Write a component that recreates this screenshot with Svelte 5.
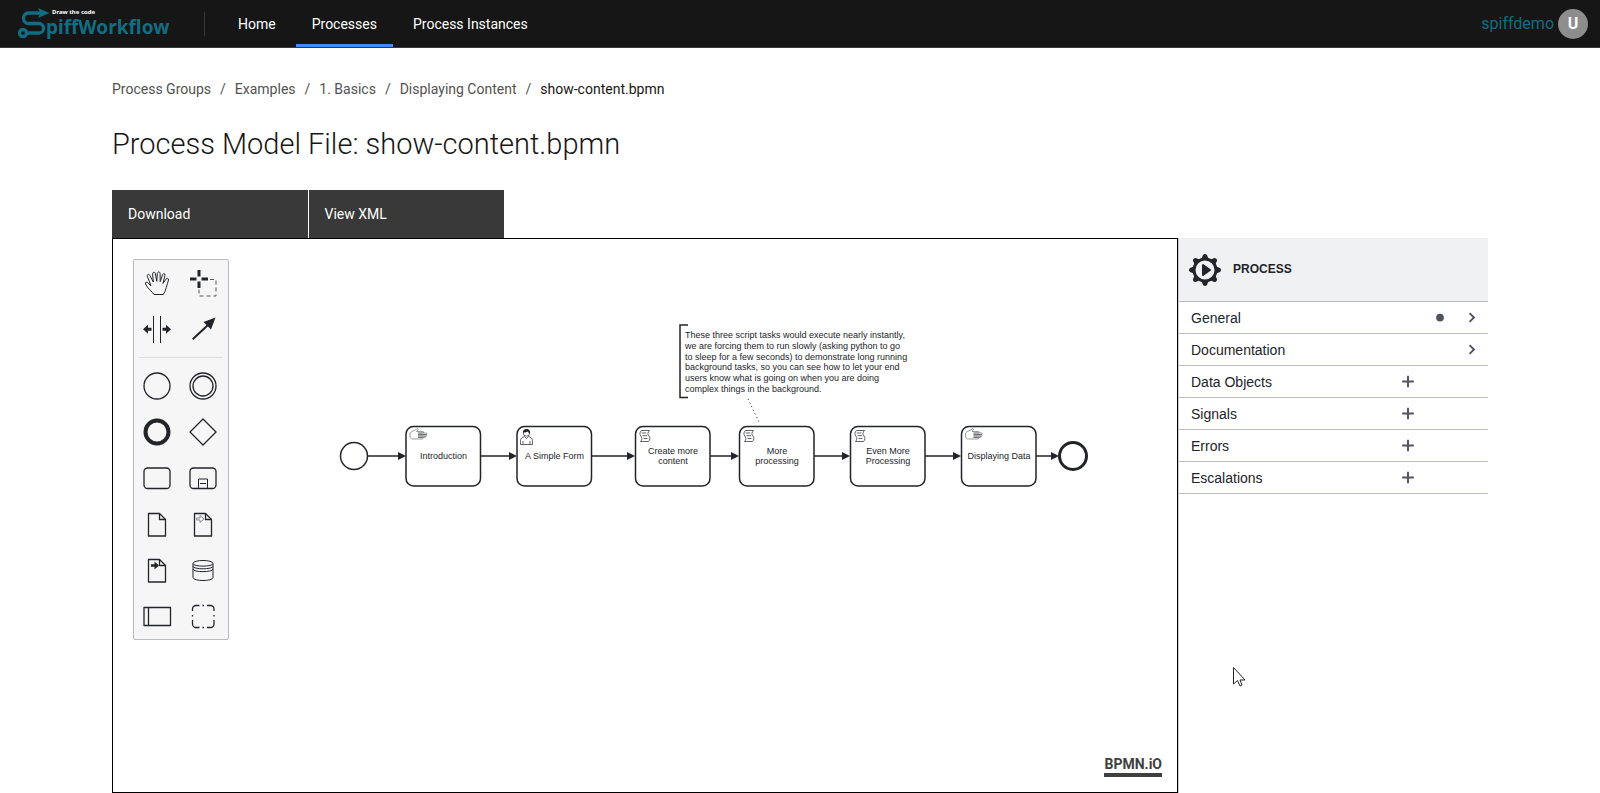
<script>
  const navItems = [
    { label: 'Home', active: false },
    { label: 'Processes', active: true },
    { label: 'Process Instances', active: false }
  ];
  const crumbs = ['Process Groups', 'Examples', '1. Basics', 'Displaying Content'];
  const actions = ['Download', 'View XML'];

  const tools = ['hand', 'lasso', 'space', 'connect'];
  const shapes = [
    'start event', 'intermediate event', 'end event', 'gateway', 'task', 'sub-process',
    'data object', 'data input', 'data output', 'data store', 'participant', 'group'
  ];

  const tasks = [
    { x: 406, type: 'manual', lines: ['Introduction'] },
    { x: 517, type: 'user', lines: ['A Simple Form'] },
    { x: 635.5, type: 'script', lines: ['Create more', 'content'] },
    { x: 739.5, type: 'script', lines: ['More', 'processing'] },
    { x: 850.5, type: 'script', lines: ['Even More', 'Processing'] },
    { x: 961.5, type: 'manual', lines: ['Displaying Data'] }
  ];
  const flows = [
    [368, 406], [481, 517], [592, 635], [710, 739], [814, 850], [925, 961], [1036, 1059]
  ];
  const note = [
    'These three script tasks would execute nearly instantly,',
    'we are forcing them to run slowly (asking python to go',
    'to sleep for a few seconds) to demonstrate long running',
    'background tasks, so you can see how to let your end',
    'users know what is going on when you are doing',
    'complex things in the background.'
  ];
  const noteY = [338, 349, 360, 370, 381, 392];

  const groups = [
    { label: 'General', dot: true, list: false },
    { label: 'Documentation', dot: false, list: false },
    { label: 'Data Objects', dot: false, list: true },
    { label: 'Signals', dot: false, list: true },
    { label: 'Errors', dot: false, list: true },
    { label: 'Escalations', dot: false, list: true }
  ];
  const teeth = [0, 45, 90, 135, 180, 225, 270, 315];
</script>

{#snippet glyph(name)}
  <svg class="glyph" viewBox="0 0 46 46" width="46" height="46" aria-hidden="true">
    {#if name === 'hand'}
      <path class="thin" d="M20 34.5C18 31.3 14 29 11.5 24 10.8 22.3 12.6 21.4 13.8 22.8L17 25.8 13.3 16.3C12.9 14.2 15 13.6 15.8 15.3L19.3 22 18.6 13.9C18.6 12 20.8 11.6 21.3 13.4L22.8 21.3 23.3 13.4C23.6 11.4 26 11.6 26.1 13.4L26.2 21.6 28.6 14.6C29.2 13 31.3 13.5 31 15.2L29 23.4 32 19.2C32.8 17.7 34.9 18.3 34.5 20.1 33 24.5 31.8 31 29.3 34.5Z" />
    {:else if name === 'lasso'}
      <path class="thick" d="M10 19h6.500M21.500 19H28M19 10v6.500M19 21.500V28" />
      <path class="dash" d="M30 19.500h6V36H19v-7" />
    {:else if name === 'space'}
      <path class="thin" d="M19.500 10v27M26.500 10v27" />
      <path class="solid" d="M9 23.300l5-4.500v3h3.500v3H14v3zM37 23.300l-5-4.500v3h-3.500v3H32v3z" />
    {:else if name === 'connect'}
      <path class="arrow" d="M12.700 33.300L28 19" />
      <path class="solid" d="M35.500 11.500l-4.500 12-7.500-7.500z" />
    {:else if name === 'start event'}
      <circle class="line" cx="23" cy="23" r="13" />
    {:else if name === 'intermediate event'}
      <circle class="line" cx="23" cy="23" r="13" />
      <circle class="line" cx="23" cy="23" r="10" />
    {:else if name === 'end event'}
      <circle class="bold" cx="23" cy="23" r="11.500" />
    {:else if name === 'gateway'}
      <path class="line" d="M23 10l13 13-13 13-13-13z" />
    {:else if name === 'task' || name === 'sub-process'}
      <rect class="line" x="10" y="13" width="26" height="20.500" rx="3.500" />
      {#if name === 'sub-process'}
        <path class="thin" d="M18.500 33.500V24h9v9.500M20 28.500h6" />
      {/if}
    {:else if name.startsWith('data') && name !== 'data store'}
      <path class="line" d="M14.500 12.500h11l6 6V35h-17z" />
      <path class="line" d="M25.500 12.500v6h6" />
      {#if name === 'data input'}
        <path class="faint" d="M16.500 17h3.500v-2.500l4 3.500-4 3.500V19h-3.500z" />
      {:else if name === 'data output'}
        <path class="solid" d="M17 17.300h3.500v-2.800l4.500 4-4.500 4v-2.800H17z" />
      {/if}
    {:else if name === 'data store'}
      <path class="thin" d="M13 16.500c0-4 20-4 20 0v14c0 4-20 4-20 0zM13 16.500c0 3.500 20 3.500 20 0M13 19.200c0 3.500 20 3.500 20 0M13 22c0 3.500 20 3.500 20 0" />
    {:else if name === 'participant'}
      <path class="line" d="M10 14.500h26.500v18H10zM14.500 14.500v18" />
    {:else}
      <path class="line" d="M12.500 18v-2a3.500 3.500 0 0 1 3.500-3.500h3.500M22.500 12.500h1.500M27 12.500h3.500a3.500 3.500 0 0 1 3.500 3.500V18M34 22v1.500M34 27v4a3.500 3.500 0 0 1-3.500 3.500H27M24 34.500h-1.500M19.500 34.500H16a3.500 3.500 0 0 1-3.500-3.500V27M12.500 23.500V22" />
    {/if}
  </svg>
{/snippet}

<div class="page">
  <header>
    <a class="logo" href="#home" aria-label="SpiffWorkflow home">
      <svg viewBox="0 0 160 40" width="160" height="40">
        <g fill="none" stroke="#126d82" stroke-width="3.300">
          <path d="M25 9H11.500a5 5 0 0 0-5 5v.500a5 5 0 0 0 5 5H22a4.500 4.500 0 0 1 4.500 4.500v.500a4.500 4.500 0 0 1-4.500 4.500H9.500" />
          <circle cx="6" cy="29" r="3.500" />
        </g>
        <path fill="#126d82" d="M21 4l11.500 5L21 14l2.500-5z" />
        <text class="tagline" x="35" y="10">Draw the code</text>
        <text class="wordmark" x="29" y="30">piffWorkflow</text>
      </svg>
    </a>
    <nav aria-label="Main">
      {#each navItems as item}
        <a href="#nav" class:active={item.active}>{item.label}</a>
      {/each}
    </nav>
    <a class="user" href="#profile">spiffdemo</a>
    <button class="avatar" aria-label="User menu">U</button>
  </header>

  <main>
    <nav class="crumbs" aria-label="Breadcrumb">
      {#each crumbs as crumb}
        <a href="#crumb">{crumb}</a><span>/</span>
      {/each}
      <a href="#crumb" class="current" aria-current="page">show-content.bpmn</a>
    </nav>
    <h1>Process Model File: show-content.bpmn</h1>
    <div class="actions">
      {#each actions as action}
        <button>{action}</button>
      {/each}
    </div>

    <div class="editor">
      <section class="canvas" aria-label="Diagram">
        <svg class="diagram" width="100%" height="100%">
          <g transform="translate(-113 -239)">
            {#each flows as [from, to]}
              <path class="flow" d="M{from} 456H{to - 6}" />
              <path class="head" d="M{to} 456l-8-4v8z" />
            {/each}
            <circle class="shape" cx="354" cy="456" r="13.500" />
            <circle class="shape end" cx="1073" cy="456" r="13.500" />
            {#each tasks as task}
              <rect class="shape" x={task.x} y="426.500" width="74.500" height="59.500" rx="7.500" />
              <g transform="translate({task.x} 426)">
                {#if task.type === 'manual'}
                  <path class="mark soft" d="M4 7.500C4.500 5.500 9 4.500 11.500 2.500c1 .6.300 2-1 3H17c.8 0 .8 1.500 0 1.500h-5 8c1 0 1 1.500 0 1.500h-8 8c1 0 1 1.500 0 1.500h-8 7c.8 0 .8 1.500 0 1.500h-7 4.500c.8 0 .8 1.500 0 1.500H7c-2 0-3-1.500-3-2.500z" />
                {:else if task.type === 'user'}
                  <path class="mark" d="M3.500 18.500v-4c0-2 2-3.500 4-4l2 2 2-2c2 .5 4 2 4 4v4zM6 18.500V15M13 18.500V15" />
                  <circle class="mark" cx="9.500" cy="7" r="3.200" />
                  <path class="head" d="M6 7.500c-.5-3 1.300-4.500 3.500-4.500s4 1.500 3.500 4.500c-1.500-.3-2-1.500-2.500-2-1 1-2.500 1-4 .8z" />
                {:else}
                  <path class="mark" d="M6 4.500h8c-2 2-2 3.500-.5 5.500s1 4-.5 5.500H5c2-2 1.500-3.500.3-5.500S4 6.500 6 4.500zM6.300 7h4.500M7 9.700h4.500M8 12.500h4" />
                {/if}
              </g>
              {#each task.lines as line, i}
                <text class="label" x={task.x + 37.5} y={(task.lines.length > 1 ? 454 : 459) + i * 10}>{line}</text>
              {/each}
            {/each}
            <path class="bracket" d="M688 325h-8v72.500h8" />
            <path class="dots" d="M748 399l12 25" />
            {#each note as line, i}
              <text class="note" x="685" y={noteY[i]}>{line}</text>
            {/each}
          </g>
        </svg>
        <div class="palette" role="toolbar" aria-label="Shapes">
          {#each tools as name}
            <button aria-label={name}>{@render glyph(name)}</button>
          {/each}
          <hr />
          {#each shapes as name}
            <button aria-label={name}>{@render glyph(name)}</button>
          {/each}
        </div>
        <a class="brand" href="#bpmn">BPMN.iO</a>
      </section>

      <aside>
        <div class="panel-head">
          <svg viewBox="0 0 32 32" width="32" height="32" aria-hidden="true">
            <circle cx="16" cy="16" r="11" fill="none" stroke="#22242a" stroke-width="3" />
            {#each teeth as angle}
              <path transform="rotate({angle} 16 16)" fill="#22242a" d="M12.500 5l1.500-4q2-2 4 0l1.500 4z" />
            {/each}
            <path fill="#22242a" stroke="#22242a" stroke-linejoin="round" stroke-width="2" d="M14 11v10l7-5z" />
          </svg>
          <strong>PROCESS</strong>
        </div>
        {#each groups as group}
          <div class="group">
            <button class="title">{group.label}</button>
            {#if group.dot}
              <svg class="icon" viewBox="0 0 32 32" width="32" height="31" aria-hidden="true"><circle cx="16" cy="16" r="4" fill="#505562" /></svg>
            {/if}
            {#if group.list}
              <button class="add" aria-label="Create {group.label}">
                <svg class="icon" viewBox="0 0 32 32" width="32" height="31"><path d="M16 10v12M10 16h12" /></svg>
              </button>
            {:else}
              <button aria-label="Toggle {group.label}">
                <svg class="icon" viewBox="0 0 32 32" width="32" height="31"><path d="M13.500 11.500L18 16l-4.500 4.500" /></svg>
              </button>
            {/if}
          </div>
        {/each}
      </aside>
    </div>
  </main>

  <svg class="pointer" viewBox="0 0 13 20" width="13" height="20" aria-hidden="true">
    <path d="M.5.500v16.500l4-3.500 2.500 5.500 2-1-2-5h5z" fill="#fff" stroke="#22242a" />
  </svg>
</div>

<style>
  :global(body) {
    margin: 0;
    background: #fff;
  }
  .page {
    display: flex;
    flex-direction: column;
    min-height: 100vh;
    box-sizing: border-box;
    position: relative;
    color: #161616;
    font-family: Roboto, "Liberation Sans", sans-serif;
    font-size: 14px;
    line-height: 18px;
  }
  button {
    border: 0;
    padding: 0;
    background: none;
    color: inherit;
    font: inherit;
    cursor: pointer;
  }
  a {
    color: inherit;
    text-decoration: none;
  }
  svg {
    display: block;
  }

  header {
    display: flex;
    align-items: center;
    height: 48px;
    box-sizing: border-box;
    padding: 0 12px 0 17px;
    border-bottom: 1px solid #393939;
    background: #161616;
    color: #fff;
  }
  .logo {
    padding: 4px 27px 4px 0;
  }
  .tagline {
    font: bold 6px "Noto Sans", sans-serif;
    fill: #fff;
  }
  .wordmark {
    font: 700 19px "Noto Sans", sans-serif;
    fill: #126d82;
  }
  header nav {
    display: flex;
    flex: 1;
    align-items: center;
    gap: 4px;
    padding-left: 18px;
    position: relative;
  }
  header nav::before {
    content: "";
    position: absolute;
    left: 0;
    width: 1px;
    height: 24px;
    background: #393939;
  }
  header nav a {
    padding: 15px 16px 11px;
    border-bottom: 3px solid transparent;
  }
  header nav a.active {
    border-color: #4589ff;
  }
  .user {
    padding: 0 4px;
    color: #126d82;
    font-size: 16px;
  }
  .avatar {
    width: 30px;
    height: 30px;
    border-radius: 50%;
    background: #8d8d8d;
    color: #fff;
    font-weight: 700;
    font-size: 16px;
  }

  main {
    display: flex;
    flex: 1;
    flex-direction: column;
    padding: 32px 7% 0;
  }
  .crumbs {
    display: flex;
    gap: 9px;
    color: #525252;
  }
  .crumbs .current {
    color: #161616;
  }
  h1 {
    margin: 28px 0;
    font-size: 29px;
    font-weight: 300;
    line-height: 36px;
  }
  .actions {
    display: flex;
    gap: 1px;
    width: 392px;
  }
  .actions button {
    flex: 1;
    height: 48px;
    padding: 0 16px;
    background: #393939;
    color: #fff;
    text-align: left;
  }

  .editor {
    display: flex;
    flex: 1;
    min-height: 420px;
  }
  .canvas {
    flex: 1;
    position: relative;
    border: 1px solid #000;
    overflow: hidden;
  }
  .diagram {
    position: absolute;
    inset: 0;
  }
  .palette {
    position: absolute;
    top: 20px;
    left: 20px;
    display: grid;
    grid-template-columns: 46px 46px;
    padding-right: 2px;
    border: 1px solid #b9bac8;
    border-radius: 2px;
    background: #f6f6f6;
  }
  .palette hr {
    grid-column: 1 / 3;
    width: 84px;
    height: 1px;
    margin: 5px;
    border: 0;
    background: #dddde0;
  }
  .glyph path,
  .glyph circle,
  .glyph rect {
    fill: none;
    stroke: #22242a;
    stroke-width: 1px;
    stroke-linejoin: round;
  }
  .glyph .line { stroke-width: 1.3px; }
  .glyph .thick { stroke-width: 3px; }
  .glyph .bold { stroke-width: 4px; }
  .glyph .arrow { stroke-width: 2px; }
  .glyph .dash { stroke: #55575c; stroke-dasharray: 4 3; }
  .glyph .faint { stroke: #8a8c90; }
  .glyph .solid { fill: #22242a; stroke: none; }

  .shape {
    fill: #fff;
    stroke: #22242a;
    stroke-width: 1.5px;
  }
  .end { stroke-width: 3px; }
  .flow, .bracket {
    fill: none;
    stroke: #22242a;
    stroke-width: 1.5px;
  }
  .head { fill: #22242a; }
  .dots {
    stroke: #22242a;
    stroke-dasharray: 1 3;
  }
  .mark {
    fill: #fff;
    stroke: #22242a;
    stroke-width: .7px;
  }
  .soft { stroke: #55575c; stroke-width: .6px; }
  .label, .note {
    font: 9px "Liberation Sans", Arial, sans-serif;
    fill: #22242a;
  }
  .label { text-anchor: middle; }

  .brand {
    position: absolute;
    right: 15px;
    bottom: 15px;
    border-bottom: 4px solid #404040;
    color: #404040;
    font: 700 14px/17px Roboto, "Liberation Sans", sans-serif;
  }

  aside {
    width: 309px;
    border-left: 1px solid #ccc;
    color: #22242a;
    font-family: "Liberation Sans", Arial, sans-serif;
  }
  .panel-head {
    display: flex;
    align-items: center;
    gap: 12px;
    height: 63px;
    padding-left: 10px;
    border-bottom: 1px solid #b9bac8;
    background: #f0f1f3;
  }
  .panel-head strong {
    padding-bottom: 2px;
    font-size: 12px;
  }
  .group {
    display: flex;
    height: 31px;
    border-bottom: 1px solid #b9bac8;
  }
  .title {
    flex: 1;
    padding-left: 12px;
    text-align: left;
  }
  .add {
    margin-right: 64px;
  }
  .icon path {
    fill: none;
    stroke: #505562;
    stroke-width: 2px;
  }
  .pointer {
    position: absolute;
    left: 1233px;
    top: 667px;
  }
</style>
